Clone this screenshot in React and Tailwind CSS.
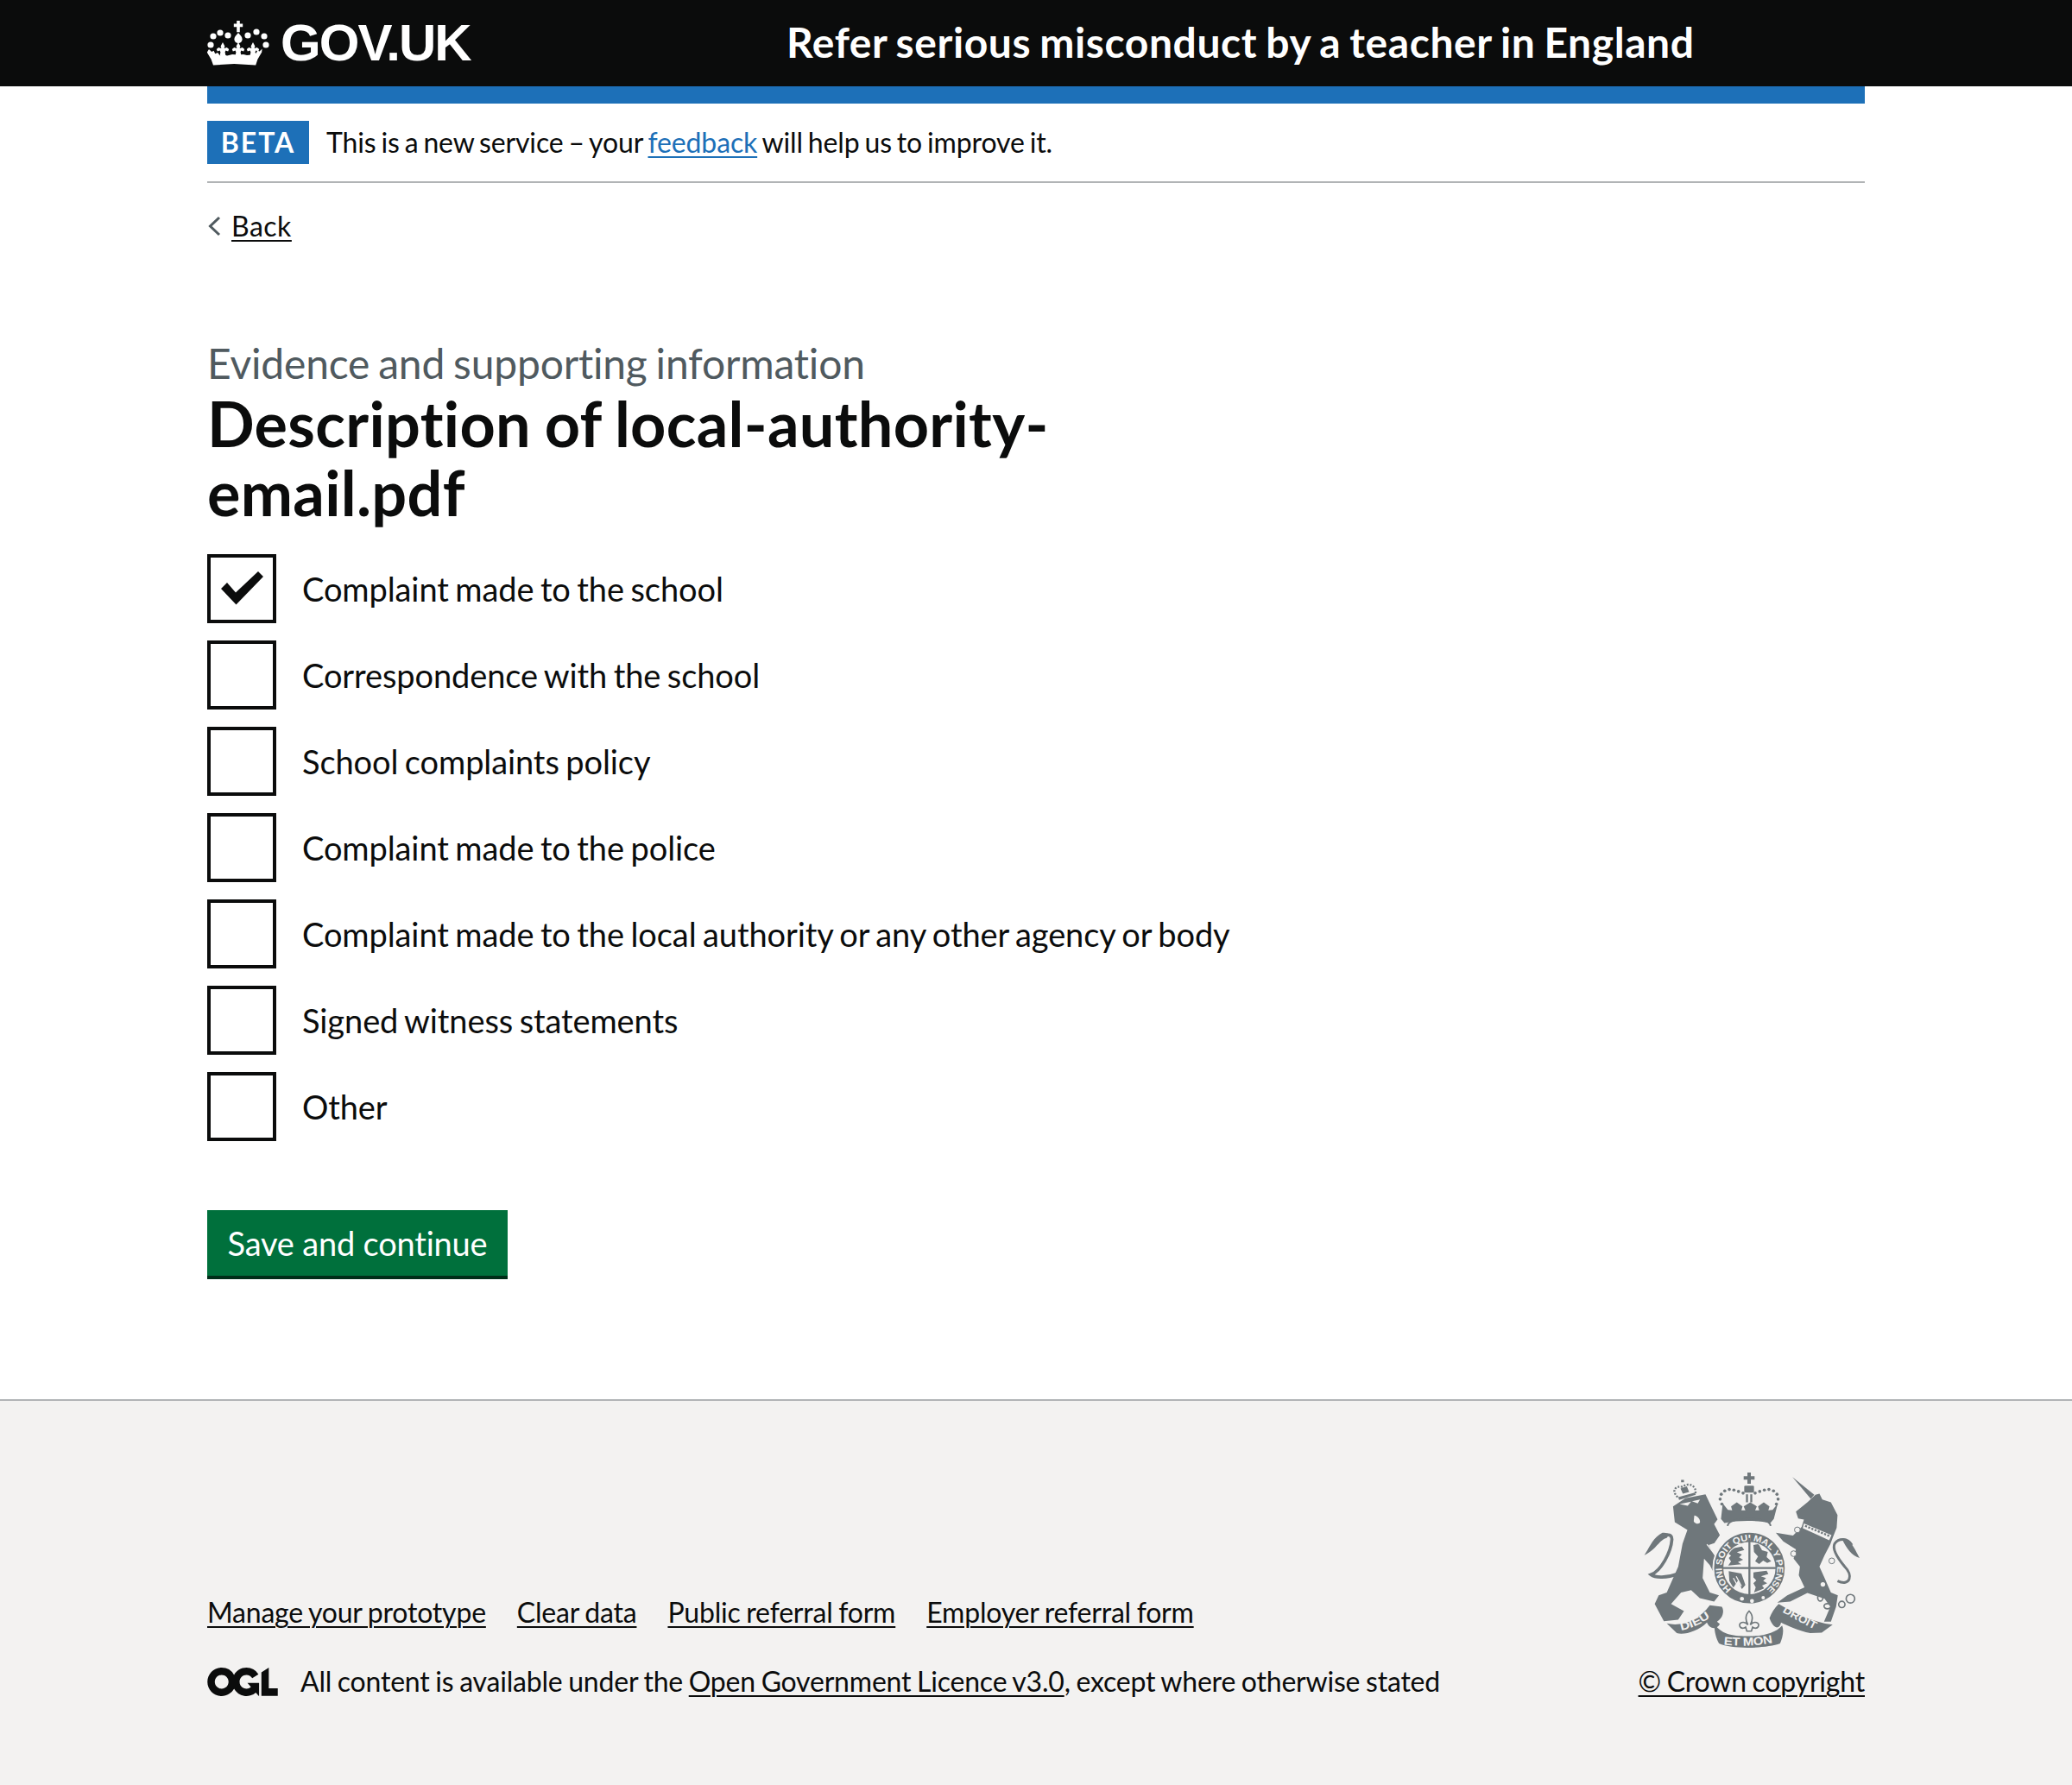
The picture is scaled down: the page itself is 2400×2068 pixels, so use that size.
const items = [
  "Complaint made to the school",
  "Correspondence with the school",
  "School complaints policy",
  "Complaint made to the police",
  "Complaint made to the local authority or any other agency or body",
  "Signed witness statements",
  "Other",
];

function CrownLogo() {
  const dots = [[15,14],[7,18],[4,28],[24,17],[47,17],[57,13],[66,18],[68,28]];
  const fleurs = [18,36,53];
  return (
    <svg width="72" height="53" viewBox="0 0 72 53" fill="#fff" className="shrink-0">
      {dots.map(([x,y],i)=><circle key={i} cx={x} cy={y} r="3.6"/>)}
      <path d="M34.2 0h3.6v3.6h3.4v3.6h-3.4v6h-3.6v-6h-3.4V3.6h3.4z"/>
      <path d="M36 14c3 3 4.6 5.4 4.6 7.4a4.6 4.6 0 0 1-9.2 0c0-2 1.6-4.4 4.6-7.4z"/>
      {fleurs.map((x,i)=>(
        <path key={i} d={`M${x} 25l2.4 4.4-.8 2.6 3.2-1 2.4 2-1 2.4-2.8-.8-.8 1.8 .8 4h-6.8l.8-4-.8-1.8-2.8.8-1-2.4 2.4-2 3.2 1-.8-2.6z`}/>
      ))}
      <path d="M2 33l3.2 3 2.4-1.2 1.6 3.4 3-1.2 2.4 3.2 5.4-.6 3 .8 6-1.4 7 .6 6-.6 4 1 5.2-.4 2.4-3 3 1.2 1.6-3.4 2.4 1.2 3-3 -.4 4-4.8 8.2-2.2 6.6-25-1.4-24.2 1.4-2.4-6.6-4.8-8.2z"/>
    </svg>
  );
}

function OglLogo() {
  return (
    <svg width="82" height="33" viewBox="0 0 483.2 195.7" fill="#0b0c0c" className="shrink-0">
      <path d="M421.5 142.8V.1l-50.7 32.3v161.1h112.4v-50.7zm-122.3-9.6A47.12 47.12 0 0 1 221 97.8c0-26 21.1-47.1 47.1-47.1 16.7 0 31.4 8.7 39.7 21.8l42.7-27.2A97.63 97.63 0 0 0 268.1 0c-36.5 0-68.3 20.1-85.1 49.7A98 98 0 0 0 97.8 0C43.9 0 0 43.9 0 97.8s43.9 97.8 97.8 97.8c36.5 0 68.3-20.1 85.1-49.7a97.76 97.76 0 0 0 149.6 25.4l19.4 22.2h3v-87.8h-80l24.3 27.5zM97.8 145c-26 0-47.1-21.1-47.1-47.1s21.1-47.1 47.1-47.1 47.2 21 47.2 47S123.8 145 97.8 145"/>
    </svg>
  );
}

function Arms() {
  const c = "#6f777b";
  const bg = "#f3f2f1";
  const font = { fontFamily: '"Liberation Sans", sans-serif', fontWeight: 700 };
  const crownDots = [[342,182],[336,165],[340,148],[352,136],[368,131],[384,133],[400,138],[416,144],[458,144],[474,138],[490,133],[506,131],[522,136],[534,148],[538,165],[532,182]];
  const unicornSpots = [[605,272],[592,355],[725,380]];
  return (
    <svg width="250" height="204" viewBox="70 70 752 612" className="shrink-0">
      {/* lion tail */}
      <path d="M190 425 C150 440 110 440 95 428 C130 415 165 350 168 305 C168 285 145 285 135 300" fill="none" stroke={c} strokeWidth="11"/>
      <path d="M72 360 C90 335 100 300 135 282 C155 280 160 290 150 300 C125 305 115 340 72 360z" fill={c}/>
      {/* lion */}
      <path fill={c} d="M172 190 L215 162 L285 148 L305 190 L327 235 L315 252 L335 290 L316 318 L296 325 L330 385 L345 425 L325 442 L300 395 L280 372 L275 440 L300 490 L332 500 L315 522 L265 510 L235 482 L200 490 L165 530 L210 555 L190 585 L140 590 L108 530 L122 500 L150 490 L190 400 L205 320 L222 272 L178 245 Z"/>
      <path fill={bg} d="M195 182l40-8-12 14zM246 222c12 2 20 12 20 22s-18 8-22-2zM238 172l28-6-8 14z"/>
      <path fill="none" stroke={bg} strokeWidth="4" d="M290 322l40 52"/>
      {/* lion crown */}
      <path fill="none" stroke={c} strokeWidth="7" strokeDasharray="6 5" d="M188 158 C165 135 180 118 205 122 C225 105 255 118 250 145"/>
      <path fill={c} d="M200 98h10v8h-10v-8zM190 158l58-16 3 8-58 18z M198 128l22-8 8 20-22 6z"/>
      {/* unicorn horn */}
      <path fill={c} d="M588 88 L664 150 L652 164 Z"/>
      {/* unicorn */}
      <path fill={c} d="M600 208 L640 176 L668 150 L682 146 L692 166 L722 176 L745 220 L742 265 L728 300 L720 322 L700 360 L682 400 L700 440 L722 490 L746 500 L740 540 L722 592 L698 592 L720 540 L700 512 L640 492 L580 522 L535 526 L570 500 L630 472 L610 430 L614 400 L592 372 L600 340 L556 312 L530 282 L590 292 L620 262 L628 236 L608 232 Z"/>
      <path fill={bg} d="M628 250l96 40-8 18-92-42z"/>
      <path fill="none" stroke={c} strokeWidth="7" strokeDasharray="7 5" d="M632 258l86 36"/>
      <path fill="none" stroke={c} strokeWidth="9" d="M745 450 C790 470 800 430 770 400 C745 370 725 340 735 320 C750 300 780 300 795 325"/>
      <path fill={c} d="M760 302 C790 300 805 340 822 370 C795 362 775 335 760 302z"/>
      {unicornSpots.map(([x,y],i)=><circle key={i} cx={x} cy={y} r="10" fill={bg} stroke={c} strokeWidth="3"/>)}
      <circle cx="716" cy="425" r="9" fill={bg}/><circle cx="694" cy="462" r="8" fill={bg}/>
      <g fill="none" stroke={c} strokeWidth="5">
        <circle cx="790" cy="512" r="15"/><circle cx="760" cy="532" r="11"/><ellipse cx="710" cy="538" rx="12" ry="9"/><ellipse cx="685" cy="508" rx="9" ry="12"/>
      </g>
      {/* crown */}
      <g fill={c}>
        {crownDots.map(([x,y],i)=><circle key={i} cx={x} cy={y} r="5.5"/>)}
        <path d="M431 72h12v13h13v12h-13v14h-12V97h-13V85h13z"/>
        <rect x="420" y="118" width="34" height="24" rx="4"/>
        <rect x="426" y="148" width="7" height="28"/><rect x="441" y="148" width="7" height="28"/>
        <path d="M345 180l18 22 15 2 -4-14 20-14 20 14-4 14h14l-6-14 23-14 23 14-6 14h14l-4-14 20-14 20 14-4 14 15-2 18-22-14 54 -12 14c-50-10-110-10-160 0l-12-14z"/>
      </g>
      <path fill="none" stroke={c} strokeWidth="6" d="M362 258c2-16 30-24 75-24s73 8 75 24"/>
      {/* garter */}
      <circle cx="438" cy="405" r="126" fill={c} stroke={bg} strokeWidth="6"/>
      <circle cx="438" cy="405" r="91" fill={bg}/>
      <defs>
        <path id="garterPath" d="M376 479 A96 96 0 1 1 500 479"/>
        <path id="dieuPath" d="M200 622 Q265 610 320 562"/>
        <path id="monPath" d="M348 672 Q437 682 526 664"/>
        <path id="droitPath" d="M552 558 Q610 592 672 622"/>
        <clipPath id="inner"><circle cx="438" cy="405" r="88"/></clipPath>
      </defs>
      <text fontSize="31" fill={bg} style={font}>
        <textPath href="#garterPath" textLength="470" lengthAdjust="spacingAndGlyphs">HONI SOIT QUI MAL Y PENSE</textPath>
      </text>
      {/* shield */}
      <g clipPath="url(#inner)">
        <g fill={c}>
          <path d="M362 340l50-10 8 12-26 8 18 8-10 10 14 8-18 8 12 8-46 4 10-14-8-12 8-8-10-8z"/>
          <path d="M452 325l18-4 12 22 20 6-4 18 16 14-14 6-14-8-14 12-14-10 10-16-14-16z"/>
          <path d="M452 420l46-6 6 12-26 8 18 6-10 10 14 8-18 8 8 10-36 14 6-18-8-14 10-10-10-10z"/>
          <path d="M366 416l44 8 14 40-12 14-6-12-6-20-18 28-14-24z"/>
        </g>
        <path fill="none" stroke={bg} strokeWidth="4" d="M382 440l20 36M392 434l18 34"/>
      </g>
      <path fill="none" stroke={c} strokeWidth="7" d="M438 300v208M346 405h184"/>
      <g fill={bg}>
        <circle cx="412" cy="512" r="7"/><circle cx="447" cy="520" r="7"/><circle cx="486" cy="508" r="6"/>
      </g>
      {/* ribbons */}
      <path fill={c} d="M150 598 C200 610 260 590 300 535 L342 540 C352 555 345 580 325 592 L335 600 C325 620 300 620 290 595 C260 625 210 640 185 632 Z"/>
      <path fill={c} d="M508 580 C515 560 525 545 540 530 C590 560 660 595 728 602 L690 630 L650 632 C610 625 570 605 548 595 C545 615 525 625 508 580Z"/>
      <path fill={c} d="M316 600 C345 640 385 642 437 642 C490 642 530 630 552 605 C560 625 552 650 545 668 C500 685 380 690 332 668 C322 650 315 625 316 600Z"/>
      <text fontSize="38" fill={bg} style={font}><textPath href="#dieuPath" textLength="112" lengthAdjust="spacingAndGlyphs">DIEU</textPath></text>
      <text fontSize="40" fill={bg} style={font}><textPath href="#monPath" textLength="172" lengthAdjust="spacingAndGlyphs">ET MON</textPath></text>
      <text fontSize="38" fill={bg} style={font}><textPath href="#droitPath" textLength="128" lengthAdjust="spacingAndGlyphs">DROIT</textPath></text>
      {/* fleur */}
      <path fill={bg} stroke={c} strokeWidth="5" d="M437 555c14 14 14 30 4 48 14-16 34-8 28 6-6 10-18 4-20 2l-4 14h-16l-4-14c-2 2-14 8-20-2-6-14 14-22 28-6-10-18-10-34 4-48z"/>
    </svg>
  );
}

function Link({ children, className = "" }) {
  return <a href="#" className={`underline decoration-2 underline-offset-[4px] ${className}`}>{children}</a>;
}

export default function App() {
  return (
    <div className="min-h-[2068px] flex flex-col bg-white text-[#0b0c0c] font-['Lato','Noto_Sans',sans-serif] [font-variant-ligatures:none] [word-spacing:-0.13em]">
      <header className="bg-[#0b0c0c] h-[100px] text-white">
        <div className="mx-[240px] h-full flex items-center">
          <div className="w-[671px] shrink-0 flex items-center gap-[13px]">
            <CrownLogo />
            <span className="font-['Liberation_Sans',sans-serif] font-bold text-[60px] leading-[60px] tracking-[-1.9px]">GOV.UK</span>
          </div>
          <span className="font-bold text-[48px] leading-[50px] tracking-[0.57px] whitespace-nowrap mt-[-2px]">Refer serious misconduct by a teacher in England</span>
        </div>
      </header>
      <main className="mx-[240px] flex-1">
        <div className="h-[20px] bg-[#1d70b8]" />
        <div className="flex items-center pt-[20px] pb-[20px] border-b-2 border-[#b1b4b6] h-[92px]">
          <span className="bg-[#1d70b8] text-white font-bold text-[32px] leading-[50px] h-[50px] w-[118px] text-center tracking-[2px] mr-[20px] shrink-0">BETA</span>
          <span className="text-[32px] leading-[40px] tracking-[-0.14px]">This is a new service – your <a href="#" className="text-[#1d70b8] underline decoration-2 underline-offset-[4px]">feedback</a> will help us to improve it.</span>
        </div>
        <div className="flex items-center mt-[30px] h-[40px] text-[32px] leading-[40px]">
          <svg width="16" height="24" viewBox="0 0 16 24" className="mr-[12px] shrink-0" fill="none" stroke="#505a5f" strokeWidth="3"><path d="M14 2 L3.5 12 L14 22"/></svg>
          <Link className="tracking-[0.5px]">Back</Link>
        </div>
        <div className="mt-[114px] w-[1280px]">
          <p className="text-[#505a5f] text-[48px] leading-[50px] tracking-[-0.2px]">Evidence and supporting information</p>
          <h1 className="font-bold text-[72px] leading-[80px] tracking-[0.3px] mt-[4px]">Description of local-authority-<br />email.pdf</h1>
        </div>
        <div className="mt-[32px] flex flex-col gap-[20px]">
          {items.map((t, i) => (
            <div key={t} className="flex items-center h-[80px]">
              <span className="w-[80px] h-[80px] border-[4px] border-[#0b0c0c] shrink-0 flex items-center justify-center">
                {i === 0 && (
                  <svg width="49" height="39" viewBox="0 0 49 39" className="mt-[-2px]"><path d="M0 20 L7 13 L17 24.5 L43 0 L49 6 L17.5 38.5 Z" fill="#0b0c0c"/></svg>
                )}
              </span>
              <span className="ml-[30px] text-[38px] leading-[50px] tracking-[-0.1px] whitespace-nowrap">{t}</span>
            </div>
          ))}
        </div>
        <button className="mt-[80px] block bg-[#00703c] text-white w-[348px] h-[76px] text-[38px] leading-[50px] tracking-[-0.2px] shadow-[0_4px_0_#002d18]">Save and continue</button>
      </main>
      <footer className="bg-[#f3f2f1] border-t-2 border-[#b1b4b6] h-[447px] shrink-0 [word-spacing:-0.08em] tracking-[-0.2px]">
        <div className="mx-[240px] pt-[82px] flex justify-between items-end">
          <div>
            <ul className="flex gap-[36px] text-[32px] leading-[40px] mb-[40px]">
              <li><Link>Manage your prototype</Link></li>
              <li><Link>Clear data</Link></li>
              <li><Link>Public referral form</Link></li>
              <li><Link>Employer referral form</Link></li>
            </ul>
            <div className="flex items-center gap-[26px] text-[32px] leading-[40px]">
              <OglLogo />
              <span>All content is available under the <Link>Open Government Licence v3.0</Link>, except where otherwise stated</span>
            </div>
          </div>
          <div className="flex flex-col items-end">
            <div className="mr-[6px]"><Arms /></div>
            <Link className="text-[32px] leading-[40px] mt-[19px]">© Crown copyright</Link>
          </div>
        </div>
      </footer>
    </div>
  );
}
